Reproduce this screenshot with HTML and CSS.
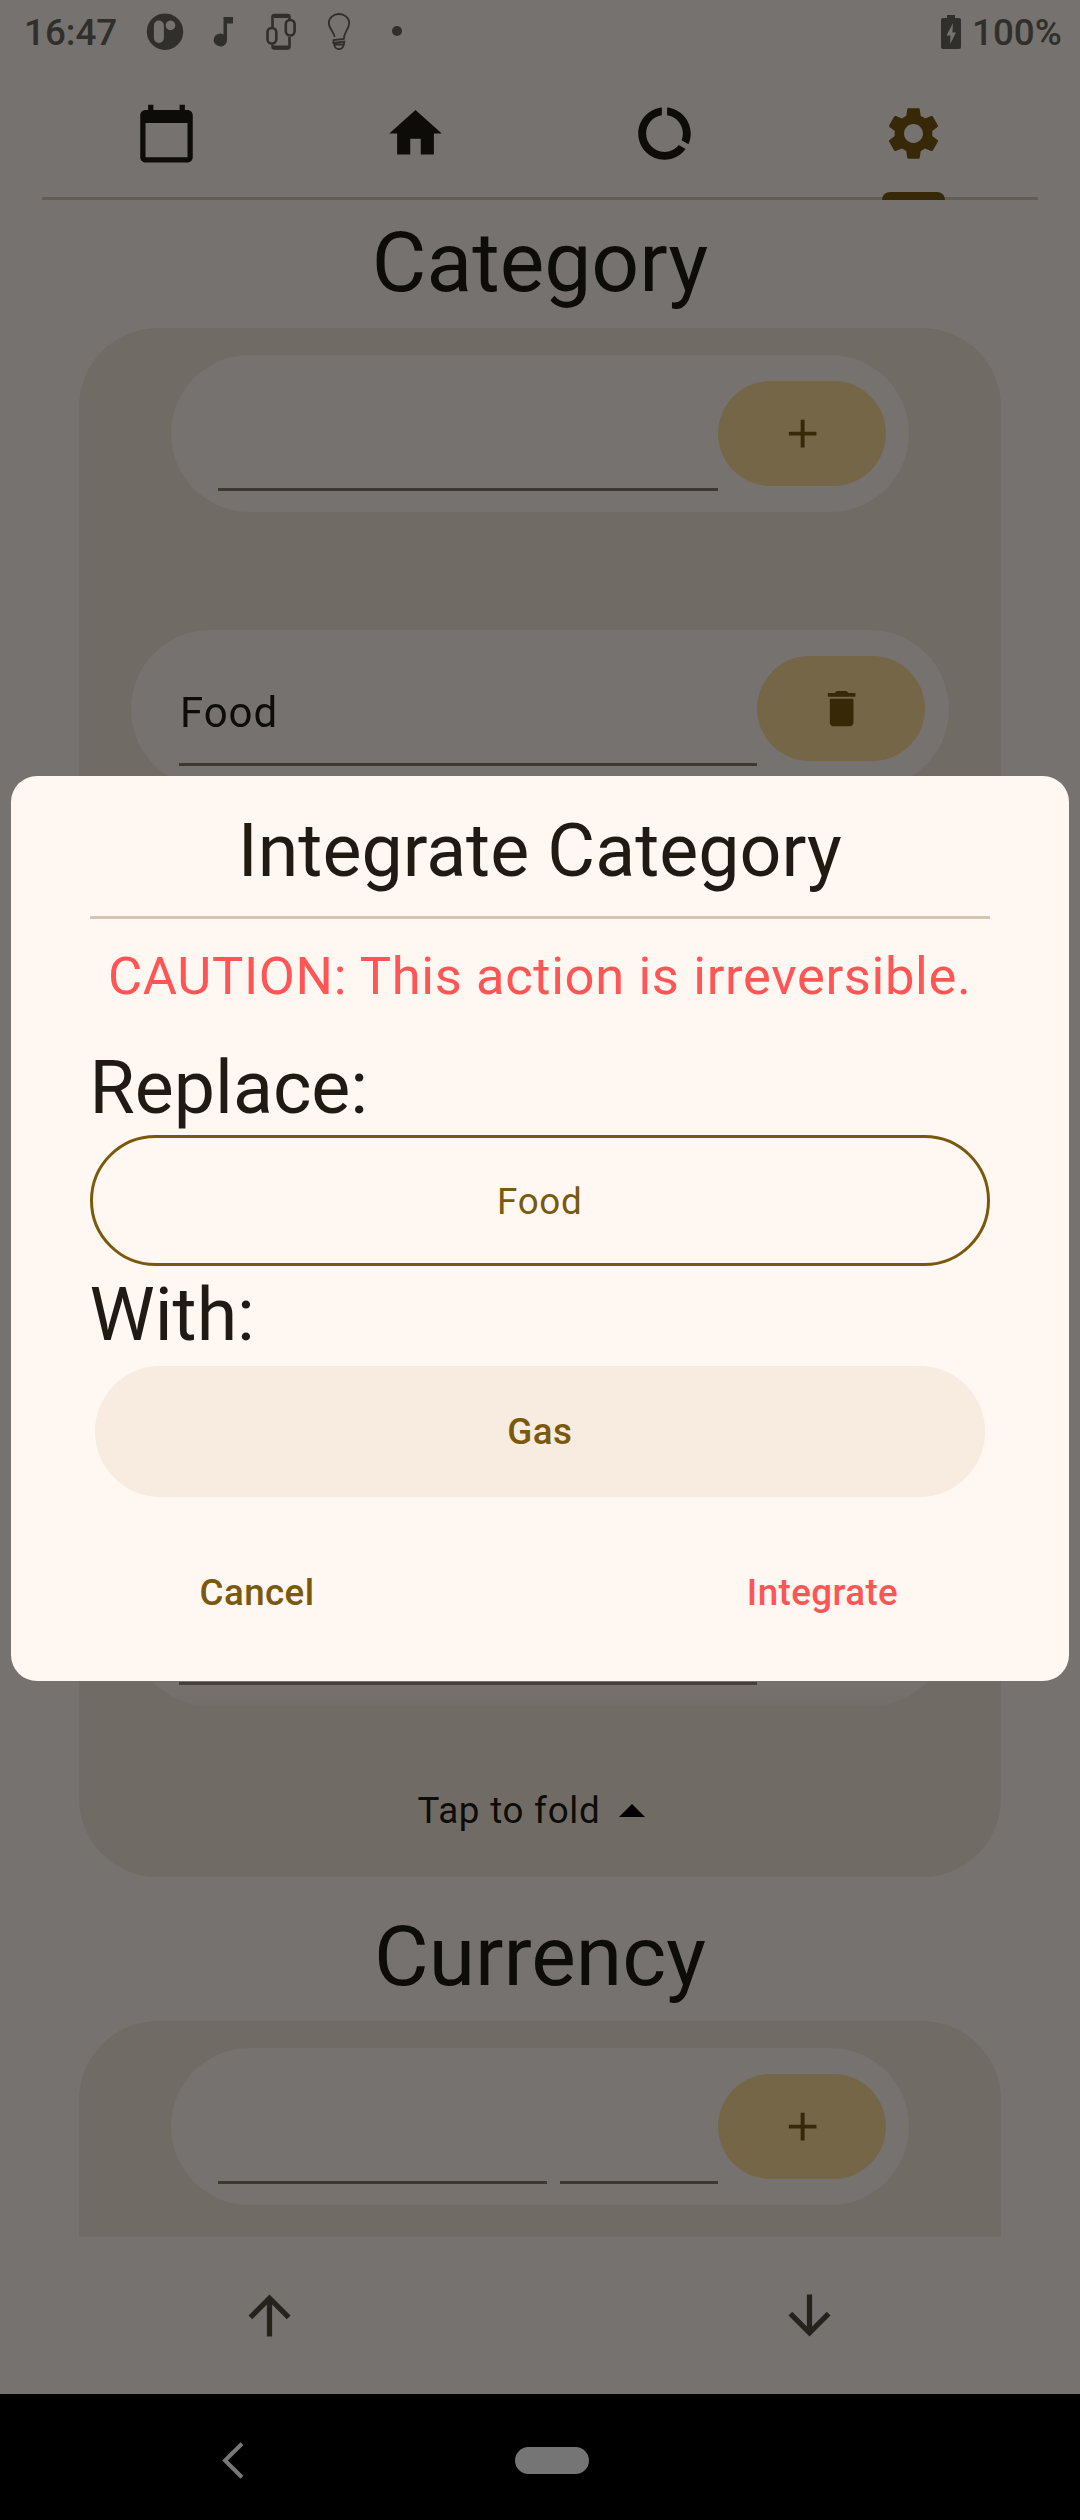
FILE: index.html
```html
<!DOCTYPE html>
<html lang="en">
<head>
<meta charset="utf-8">
<title>Settings</title>
<link rel="stylesheet" href="styles.css">
</head>
<body>
<svg class="defs" width="0" height="0">
  <symbol id="add" viewBox="0 0 24 24"><path d="M19 13h-6v6h-2v-6H5v-2h6V5h2v6h6v2z"/></symbol>
  <symbol id="delete" viewBox="0 0 24 24"><path d="M6 19c0 1.1.9 2 2 2h8c1.1 0 2-.9 2-2V7H6v12zM19 4h-3.5l-1-1h-5l-1 1H5v2h14V4z"/></symbol>
</svg>
<div class="screen">
  <header class="status">
    <span class="clock">16:47</span>
    <svg class="notifications" viewBox="140 0 280 64">
      <path fill-rule="evenodd" d="M165 13.5a18.2 18.2 0 1 0 .01 0zM158.900 20.500a5 5 0 0 1 5 5v12.500a5 5 0 0 1-10 0v-12.500a5 5 0 0 1 5-5zM170.500 20.500a4.800 4.800 0 1 1-.01 0z"/>
      <path d="M223.500 17h9.500v6.500h-6v16.500a6.700 6.400 0 1 1-3.500-5.600z"/>
      <g fill="none" stroke="#302f2c" stroke-width="2.600">
        <path d="M272.500 27v-10q0-2 2-2h13q2 0 2 2v3M289.500 37v9.500q0 2-2 2h-13q-2 0-2-2v-2"/>
        <path stroke-width="4" d="M273.500 16h15M273.500 47.500h15"/>
        <rect x="267.500" y="28" width="8.800" height="15.500" rx="4.200"/>
        <rect x="285.800" y="20" width="8.800" height="15.500" rx="4.200"/>
      </g>
      <g fill="none" stroke="#302f2c" stroke-width="1.800">
        <path d="M334.500 37c0-5-5.700-8-5.700-14a10.200 9 0 0 1 20.400 0c0 6-5.400 9-5.400 16l-10.300 1v3l10.800-1.500c0 10-10.300 10-10.300 1.500M334 44.500h9.500"/>
      </g>
      <circle cx="397" cy="31" r="5"/>
    </svg>
    <svg class="battery" viewBox="0 0 20 34"><path fill-rule="evenodd" d="M6 0h8v3h4q2 0 2 2v27q0 2-2 2H2q-2 0-2-2V5q0-2 2-2h4zM12 8L5.500 20.500h3.800V29L15 17.500h-3.600z"/></svg>
    <span class="percent">100%</span>
  </header>

  <nav class="tabs">
    <div class="tab"><svg viewBox="0 0 24 24"><path d="M20 3h-1V1h-2v2H7V1H5v2H4c-1.100 0-2 .9-2 2v16c0 1.100.9 2 2 2h16c1.100 0 2-.9 2-2V5c0-1.100-.9-2-2-2zm0 18H4V8h16v13z"/></svg></div>
    <div class="tab"><svg viewBox="0 0 24 24"><path d="M10 20v-6h4v6h5v-8h3L12 3 2 12h3v8z"/></svg></div>
    <div class="tab"><svg viewBox="0 0 24 24"><path d="M13 2.050v3.030c3.390.49 6 3.390 6 6.920 0 .9-.18 1.750-.48 2.540l2.600 1.530c.56-1.240.88-2.620.88-4.070 0-5.180-3.950-9.450-9-9.950zM12 19c-3.870 0-7-3.130-7-7 0-3.530 2.610-6.430 6-6.920V2.050c-5.060.5-9 4.760-9 9.950 0 5.520 4.470 10 9.990 10 3.310 0 6.240-1.610 8.060-4.090l-2.600-1.530C16.170 17.980 14.210 19 12 19z"/></svg></div>
    <div class="tab active"><svg viewBox="0 0 24 24"><path d="M19.140 12.940c.04-.3.06-.61.06-.94 0-.32-.02-.64-.07-.94l2.030-1.580c.18-.14.23-.41.12-.61l-1.920-3.320c-.12-.22-.37-.29-.59-.22l-2.390.96c-.5-.38-1.030-.7-1.620-.94l-.36-2.540c-.04-.24-.24-.41-.48-.41h-3.840c-.24 0-.43.17-.47.41l-.36 2.540c-.59.24-1.130.57-1.620.94l-2.390-.96c-.22-.08-.47 0-.59.22L2.740 8.870c-.12.21-.08.47.12.61l2.030 1.580c-.05.3-.09.63-.09.94s.02.64.07.94l-2.030 1.580c-.18.14-.23.41-.12.61l1.920 3.320c.12.22.37.29.59.22l2.390-.96c.5.38 1.030.7 1.620.94l.36 2.540c.05.24.24.41.48.41h3.840c.24 0 .44-.17.47-.41l.36-2.540c.59-.24 1.130-.56 1.620-.94l2.390.96c.22.08.47 0 .59-.22l1.920-3.320c.12-.22.07-.47-.12-.61l-2.010-1.580zM12 15.600c-1.980 0-3.600-1.620-3.600-3.600s1.620-3.600 3.600-3.600 3.600 1.620 3.600 3.600-1.620 3.600-3.600 3.600z"/></svg></div>
  </nav>

  <main class="content">
    <h1 class="heading">Category</h1>
    <section class="card">
      <div class="entry new">
        <div class="field"></div>
        <div class="tonal"><svg><use href="#add"/></svg></div>
      </div>
      <div class="list">
        <div class="entry"><div class="field">Food</div><div class="tonal"><svg><use href="#delete"/></svg></div></div>
        <div class="entry"><div class="field"></div><div class="tonal"></div></div>
        <div class="entry"><div class="field"></div><div class="tonal"></div></div>
        <div class="entry"><div class="field"></div><div class="tonal"></div></div>
        <div class="entry"><div class="field"></div><div class="tonal"></div></div>
        <div class="entry"><div class="field"></div><div class="tonal"></div></div>
        <div class="entry"><div class="field"></div><div class="tonal"></div></div>
      </div>
      <div class="fold"><span>Tap to fold</span><svg viewBox="0 0 26 13"><path d="M0 13L13 0l13 13z"/></svg></div>
    </section>
    <h1 class="heading second">Currency</h1>
    <section class="card">
      <div class="entry new">
        <div class="field"></div>
        <div class="field short"></div>
        <div class="tonal"><svg><use href="#add"/></svg></div>
      </div>
    </section>
  </main>

  <div class="arrows">
    <svg viewBox="0 0 24 24"><path d="M4 12l1.410 1.410L11 7.830V20h2V7.830l5.580 5.590L20 12l-8-8-8 8z"/></svg>
    <svg viewBox="0 0 24 24"><path d="M20 12l-1.410-1.410L13 16.170V4h-2v12.170l-5.580-5.590L4 12l8 8 8-8z"/></svg>
  </div>

  <footer class="system">
    <svg class="back" viewBox="0 0 22 37"><path d="M20 1.800L3 18.500l17 16.700"/></svg>
    <div class="home"></div>
    <div></div>
  </footer>

  <div class="dialog">
    <h2 class="title">Integrate Category</h2>
    <div class="rule"></div>
    <p class="caution">CAUTION: This action is irreversible.</p>
    <h2 class="label replace">Replace:</h2>
    <div class="button outlined">Food</div>
    <h2 class="label with">With:</h2>
    <div class="button filled">Gas</div>
    <div class="actions">
      <div class="button">Cancel</div>
      <div class="button danger">Integrate</div>
    </div>
  </div>
</div>
</body>
</html>
```
FILE: styles.css
```css
* { box-sizing: border-box; }

body {
  margin: 0;
  font-family: Roboto, "Liberation Sans", sans-serif;
  color: #0d0c08;
}

h1, h2, p { margin: 0; font-weight: 400; }

.defs { position: absolute; }

.screen {
  position: relative;
  display: flex;
  flex-direction: column;
  width: 1080px;
  height: 2520px;
  background: #76726f;
  overflow: hidden;
}

/* Status bar */
.status {
  display: flex;
  align-items: center;
  height: 64px;
  padding: 0 18px 0 24px;
  font-size: 36.75px;
  font-weight: 500;
  line-height: 66px;
  color: #302f2c;
  fill: #302f2c;
}
.clock { width: 116px; padding-top: 2px; }
.notifications { width: 280px; height: 64px; }
.battery { width: 20px; height: 34px; margin-left: auto; }
.percent { width: 90px; margin-left: 11px; padding-top: 2px; }

/* Tabs */
.tabs {
  display: flex;
  height: 136px;
  margin: 0 42px;
  background: linear-gradient(#655d53, #655d53) 0 100% / 100% 3px no-repeat;
}
.tab {
  display: flex;
  flex: 1;
  flex-direction: column;
  align-items: center;
  padding-top: 38px;
  fill: #0d0c08;
}
.tab svg { width: 63px; height: 63px; margin-left: 0.500px; }
.tab.active { fill: #372808; }
.tab.active::after {
  content: "";
  width: 63px;
  height: 8.500px;
  margin-top: auto;
  border-radius: 8px 8px 0 0;
  background: #372808;
}

/* Settings sections */
.content { height: 2037px; overflow: hidden; }
.heading {
  height: 128px;
  font-size: 84px;
  line-height: 125px;
  text-align: center;
}
.heading.second { height: 144.500px; padding-top: 17px; }

.card {
  margin: 0 79px;
  padding-top: 26.500px;
  border-radius: 79px;
  background: #706b64;
  height: 1548.700px;
}
.entry {
  display: flex;
  flex: none;
  width: 817.500px;
  height: 157.500px;
  margin: 0 auto;
  padding: 26.250px 23.500px 0 47.250px;
  border-radius: 79px;
  background: #76726f;
}
.entry.new { width: 738.500px; padding-right: 23px; }
.field {
  flex: 1;
  height: 110px;
  padding-left: 1.500px;
  border-bottom: 3px solid #3d3932;
  font-size: 42px;
  line-height: 113px;
  letter-spacing: 0.900px;
}
.field.short { flex: 0 0 158px; margin-left: 13px; }
.tonal {
  display: flex;
  align-items: center;
  justify-content: center;
  width: 168px;
  height: 105px;
  border-radius: 53px;
  background: #756648;
  fill: #372808;
}
.tonal svg { width: 47.250px; height: 47.250px; }

.list {
  display: flex;
  flex-direction: column;
  gap: 26.250px;
  height: 1204px;
  margin-top: 26px;
  padding-top: 92px;
  overflow: hidden;
  mask-image: linear-gradient(#000 1135px, transparent 1204px);
}
.fold {
  display: flex;
  align-items: center;
  justify-content: center;
  gap: 18px;
  height: 137px;
  padding-right: 18px;
  font-size: 36.750px;
  letter-spacing: 0.750px;
}
.fold svg { width: 26px; height: 13px; }

/* Reorder arrows */
.arrows {
  display: flex;
  align-items: center;
  justify-content: space-around;
  height: 157px;
  fill: #25211b;
}
.arrows svg { width: 63px; height: 63px; margin-left: -1px; }

/* System navigation */
.system {
  display: grid;
  grid-template-columns: 465px 174px 1fr;
  align-items: center;
  justify-items: center;
  height: 126px;
  padding-top: 6px;
  background: #000;
}
.back { width: 22px; height: 37px; fill: none; stroke: #777; stroke-width: 4; }
.home { width: 74px; height: 27px; border-radius: 14px; background: #757575; }

/* Dialog */
.dialog {
  position: absolute;
  left: 11px;
  top: 776px;
  width: 1058px;
  height: 905px;
  padding: 30px 79px 0 78.500px;
  border-radius: 26px;
  background: #fff7f1;
  color: #1f1b13;
}
.title { font-size: 73.500px; line-height: 91px; text-align: center; }
.rule { height: 2.700px; margin-top: 19.300px; background: #d3c5b4; }
.caution {
  margin: 24px -40px 0;
  font-size: 52.500px;
  line-height: 66px;
  letter-spacing: 0.640px;
  text-align: center;
  color: #ff5555;
}
.label { font-size: 73.500px; line-height: 90px; }
.replace { margin-top: 34.500px; }
.with { margin-top: 3.300px; }
.button {
  height: 131.500px;
  font-size: 36.750px;
  font-weight: 500;
  line-height: 132px;
  letter-spacing: 0.400px;
  text-align: center;
  color: #7a590c;
  border-radius: 66px;
}
.outlined {
  margin-top: 1.500px;
  border: 3px solid #7a590c;
  font-weight: 400;
  line-height: 127px;
  letter-spacing: 0.750px;
}
.filled { margin: 6px 5.500px 0; background: #f8ebdf; }
.actions { display: flex; justify-content: space-between; margin-top: 29.500px; }
.actions .button { width: 335px; }
.button.danger { color: #ff5555; }
```
